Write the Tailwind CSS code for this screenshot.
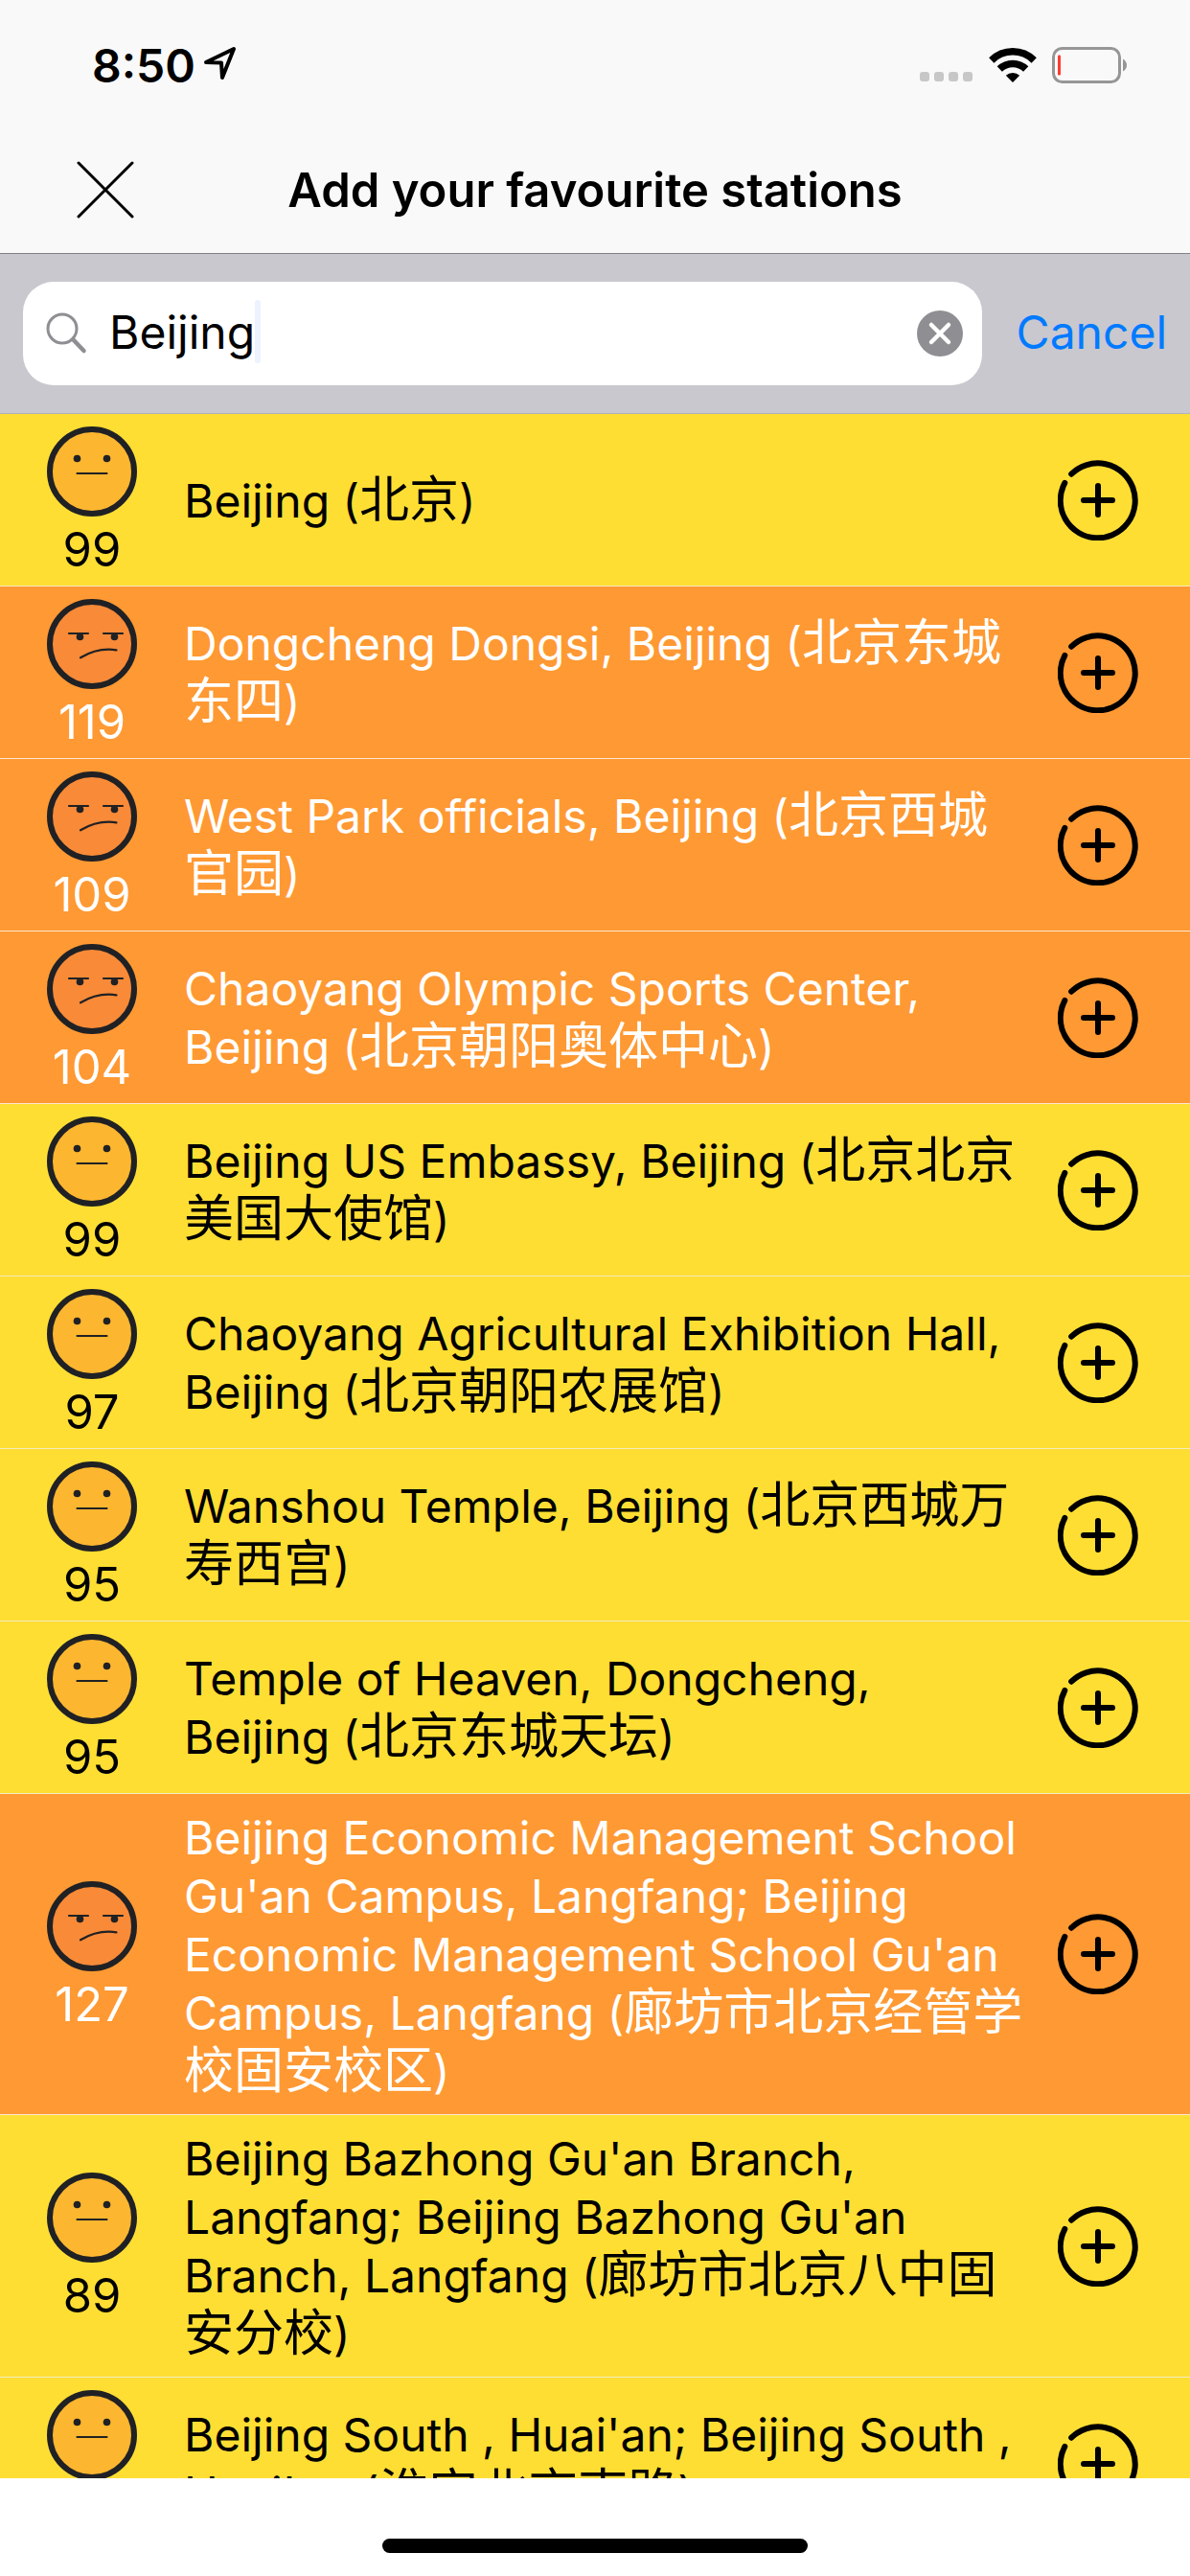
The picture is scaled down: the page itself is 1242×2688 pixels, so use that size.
<!DOCTYPE html>
<html lang="en">
<head>
    <meta charset="UTF-8">
    <meta name="viewport" content="width=device-width, initial-scale=1.0">
    <title>Add your favourite stations</title>
    <script src="https://cdn.jsdelivr.net/npm/@tailwindcss/browser@4"></script>
</head>
<body class="h-screen flex flex-col overflow-hidden bg-white text-black text-[48px] leading-[61px] font-['Inter','Noto_Sans_CJK_SC',sans-serif]">
    <header class="bg-[#f9f9f9] border-b border-[#828286] shrink-0">
        <!-- Status bar -->
        <div class="flex items-center justify-between h-[132px] pt-1 pl-24 pr-16">
            <div class="flex items-center gap-2">
                <span class="font-semibold">8:50</span>
                <svg class="w-9 h-9 mb-1" viewBox="0 0 36 36" fill="none" stroke="black" stroke-width="4" stroke-linejoin="round">
                    <path d="M3 17 L32 3 L20 33 L19 17.500 Z"/>
                </svg>
            </div>
            <div class="flex items-center">
                <svg class="w-14 h-9 mr-4" viewBox="0 0 56 36" fill="#c7c7c7">
                    <rect x="0" y="25" width="10" height="10" rx="3"/>
                    <rect x="15" y="25" width="10" height="10" rx="3"/>
                    <rect x="30" y="25" width="10" height="10" rx="3"/>
                    <rect x="45" y="25" width="10" height="10" rx="3"/>
                </svg>
                <svg class="w-[50px] h-9 mr-4" viewBox="0 0 50 36">
                    <g fill="none" stroke="black" stroke-width="7.500">
                        <path d="M2.800 13 A31.500 31.500 0 0 1 47.200 13"/>
                        <path d="M11.300 22 A19.500 19.500 0 0 1 38.700 22"/>
                    </g>
                    <path d="M17.800 28.800 A10.500 10.500 0 0 1 32.200 28.800 L25 36 Z"/>
                </svg>
                <svg class="w-20 h-[38px]" viewBox="0 0 80 38">
                    <rect x="1.500" y="1.500" width="69" height="35" rx="9" fill="none" stroke="#969696" stroke-width="3"/>
                    <rect x="6" y="8.500" width="3" height="21" rx="1" fill="#ff3b30"/>
                    <path d="M74 12.500 Q78 15 78 19 Q78 23 74 25.500 Z" fill="#969696"/>
                </svg>
            </div>
        </div>
        <!-- Title bar -->
        <div class="grid grid-cols-[1fr_auto_1fr] items-center h-[132px] px-20">
            <button type="button" aria-label="Close" class="w-15 h-15">
                <svg class="w-full h-full" viewBox="0 0 60 60" stroke="black" stroke-width="3" stroke-linecap="round">
                    <path d="M2 2 L58 58 M58 2 L2 58"/>
                </svg>
            </button>
            <h1 class="text-[49px] font-semibold">Add your favourite stations</h1>
        </div>
    </header>

    <form class="flex items-center gap-9 bg-[#c9c8ce] border-b border-[#b3b2b6] px-6 py-[29px] shrink-0">
        <div class="flex flex-1 min-w-0 items-center h-[108px] rounded-[32px] bg-white pl-6 pr-5">
            <label for="search" class="mr-[22px]" aria-label="Search stations">
                <svg class="w-11 h-11" viewBox="0 0 44 44" fill="none" stroke="#8e8e93" stroke-linecap="round">
                    <circle cx="17" cy="17" r="15" stroke-width="3"/>
                    <path d="M28.500 28.500 L39.500 40" stroke-width="4.500"/>
                </svg>
            </label>
            <input id="search" type="text" value="Beijing" class="field-sizing-content pb-1 outline-none">
            <span class="w-[6px] h-[66px] mb-1 rounded-full bg-[#edf2ff]"></span>
            <button type="button" aria-label="Clear" class="ml-auto w-12 h-12">
                <svg class="w-full h-full" viewBox="0 0 48 48">
                    <circle cx="24" cy="24" r="24" fill="#8e8e93"/>
                    <path d="M15 15 L33 33 M33 15 L15 33" stroke="white" stroke-width="4.500" stroke-linecap="round"/>
                </svg>
            </button>
        </div>
        <button type="button" class="pb-1 text-[#007aff]">Cancel</button>
    </form>

    <ul id="stations" class="flex-1 min-h-0 overflow-hidden"></ul>

    <footer class="flex justify-center items-end h-[102px] pb-6 bg-white shrink-0">
        <div class="w-[444px] h-[15px] rounded-full bg-black"></div>
    </footer>

    <script>
        const stations = [
            { aqi: 99, name: 'Beijing', local: '北京' },
            { aqi: 119, name: 'Dongcheng Dongsi, Beijing', local: '北京东城东四' },
            { aqi: 109, name: 'West Park officials, Beijing', local: '北京西城官园' },
            { aqi: 104, name: 'Chaoyang Olympic Sports Center, Beijing', local: '北京朝阳奥体中心' },
            { aqi: 99, name: 'Beijing US Embassy, Beijing', local: '北京北京美国大使馆' },
            { aqi: 97, name: 'Chaoyang Agricultural Exhibition Hall, Beijing', local: '北京朝阳农展馆' },
            { aqi: 95, name: 'Wanshou Temple, Beijing', local: '北京西城万寿西宫' },
            { aqi: 95, name: 'Temple of Heaven, Dongcheng, Beijing', local: '北京东城天坛' },
            { aqi: 127, name: "Beijing Economic Management School Gu'an Campus, Langfang; Beijing Economic Management School Gu'an Campus, Langfang", local: '廊坊市北京经管学校固安校区' },
            { aqi: 89, name: "Beijing Bazhong Gu'an Branch, Langfang; Beijing Bazhong Gu'an Branch, Langfang", local: '廊坊市北京八中固安分校' },
            { aqi: 89, name: "Beijing South , Huai'an; Beijing South , Huai'an", local: '淮安北京南路' },
        ];

        const neutralFace = `
            <svg class="w-[94px] h-[94px]" viewBox="0 0 94 94" fill="none" stroke="#202124">
                <circle cx="47" cy="47" r="44" fill="#fdb62f" stroke-width="6"/>
                <g fill="#202124" stroke="none"><circle cx="31.500" cy="33.500" r="3.800"/><circle cx="62.500" cy="33.500" r="3.800"/></g>
                <path d="M31.500 49 H62.500" stroke-width="2.200" stroke-linecap="round"/>
            </svg>`;

        const annoyedFace = `
            <svg class="w-[94px] h-[94px]" viewBox="0 0 94 94" fill="none" stroke="#202124">
                <circle cx="47" cy="47" r="44" fill="#f88a38" stroke-width="6"/>
                <g fill="#202124" stroke="none"><circle cx="34.500" cy="39.500" r="3.800"/><circle cx="70.500" cy="39.500" r="3.800"/></g>
                <path d="M23 36 H43 M59 36 H79 M35 61.300 Q53 50.500 72.500 53.300" stroke-width="2.200" stroke-linecap="round"/>
            </svg>`;

        const list = document.getElementById('stations');
        stations.forEach(station => {
            // Above 100 the air is unhealthy for sensitive groups
            const bad = station.aqi > 100;
            const row = document.createElement('li');
            row.className = bad
                ? 'flex items-center min-h-[180px] border-b border-[#ffe6cf] bg-[#ff9933] text-white'
                : 'flex items-center min-h-[180px] border-b border-[#f3ecc0] bg-[#ffde33] text-black';
            row.innerHTML = `
                <div class="flex flex-col items-center gap-[11px] w-48 shrink-0">
                    ${bad ? annoyedFace : neutralFace}
                    <span class="text-[49px] leading-[48px]">${station.aqi}</span>
                </div>
                <p class="flex-1 min-w-0 pt-[15px] pb-[14px]">${station.name} (<span lang="zh-CN" class="text-[52px] leading-none">${station.local}</span>)</p>
                <button type="button" aria-label="Add ${station.name}" class="w-[84px] h-[84px] ml-8 mr-[54px] shrink-0">
                    <svg class="w-full h-full" viewBox="0 0 84 84" fill="none" stroke="black" stroke-width="6" stroke-linecap="round">
                        <path d="M14.200 14.700 A39 39 0 1 1 7.300 24 M27 42 H57 M42 27 V57"/>
                    </svg>
                </button>
            `;
            list.appendChild(row);
        });
    </script>
</body>
</html>
